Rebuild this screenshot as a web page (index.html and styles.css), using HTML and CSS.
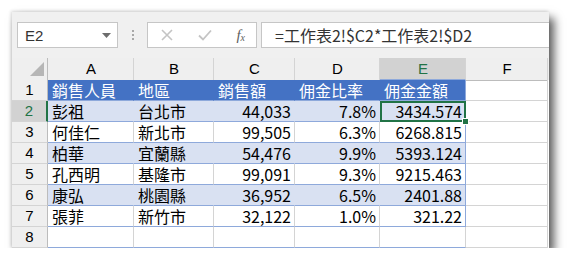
FILE: index.html
```html
<!DOCTYPE html>
<html lang="zh-Hant">
<head>
    <meta charset="UTF-8">
    <title>工作表2</title>
    <link rel="stylesheet" href="styles.css">
</head>
<body>
    <div class="window">
        <!-- 名稱方塊 + 資料編輯列 -->
        <div class="toolbar">
            <div class="namebox">
                <span>E2</span>
                <svg class="drop" width="9" height="5" viewBox="0 0 9 5"><path d="M0 0H9L4.5 5Z" fill="#6d6d6d"/></svg>
            </div>
            <div class="grip"><i></i><i></i><i></i></div>
            <div class="buttons">
                <svg width="14" height="14" viewBox="0 0 14 14"><path d="M2 2L12 12M12 2L2 12" stroke="#c4c4c4" stroke-width="1.6"/></svg>
                <svg width="16" height="14" viewBox="0 0 16 14"><path d="M2 7.5L6 11.5L14 2.5" stroke="#c4c4c4" stroke-width="1.8" fill="none"/></svg>
                <span class="fx">f<sub>x</sub></span>
            </div>
            <div class="formula">=工作表2!$C2*工作表2!$D2</div>
        </div>

        <div class="sheet">
            <div class="row head">
                <div class="corner"><svg width="14" height="14" viewBox="0 0 14 14"><path d="M14 0V14H0Z" fill="#b6b6b6"/></svg></div>
                <div>A</div><div>B</div><div>C</div><div>D</div><div class="on">E</div><div>F</div>
            </div>
            <div class="row title">
                <div class="num">1</div>
                <div>銷售人員</div><div>地區</div><div>銷售額</div><div>佣金比率</div><div>佣金金額</div><div class="out"></div>
            </div>
            <div class="row band">
                <div class="num on">2</div>
                <div>彭祖</div><div>台北市</div><div class="r">44,033</div><div class="r">7.8%</div><div class="r sel">3434.574</div><div class="out"></div>
            </div>
            <div class="row">
                <div class="num">3</div>
                <div>何佳仁</div><div>新北市</div><div class="r">99,505</div><div class="r">6.3%</div><div class="r">6268.815</div><div class="out"></div>
            </div>
            <div class="row band">
                <div class="num">4</div>
                <div>柏華</div><div>宜蘭縣</div><div class="r">54,476</div><div class="r">9.9%</div><div class="r">5393.124</div><div class="out"></div>
            </div>
            <div class="row">
                <div class="num">5</div>
                <div>孔西明</div><div>基隆市</div><div class="r">99,091</div><div class="r">9.3%</div><div class="r">9215.463</div><div class="out"></div>
            </div>
            <div class="row band">
                <div class="num">6</div>
                <div>康弘</div><div>桃園縣</div><div class="r">36,952</div><div class="r">6.5%</div><div class="r">2401.88</div><div class="out"></div>
            </div>
            <div class="row">
                <div class="num">7</div>
                <div>張菲</div><div>新竹市</div><div class="r">32,122</div><div class="r">1.0%</div><div class="r">321.22</div><div class="out"></div>
            </div>
            <div class="row empty">
                <div class="num">8</div>
                <div></div><div></div><div></div><div></div><div></div><div></div>
            </div>
        </div>
    </div>
</body>
</html>
```

FILE: styles.css
```css
body {
    margin: 0;
    background-color: #ffffff;
    font-family: "Noto Sans CJK TC", sans-serif;
}

.window {
    margin: 12px 0 0 12px;
    width: 537px;
    background-color: #ffffff;
    box-shadow: 5px 6px 9px rgba(0, 0, 0, 0.65), -1px -1px 3px rgba(0, 0, 0, 0.15);
}

/* 上方的資料編輯列 */
.toolbar {
    display: flex;
    align-items: center;
    height: 46px;
    padding-left: 5px;
    background-color: #f0f0f0;
}
.namebox {
    display: flex;
    align-items: center;
    justify-content: space-between;
    box-sizing: border-box;
    width: 101px;
    height: 26px;
    padding: 0 6px 0 7px;
    background-color: #ffffff;
    border: 1px solid #c6c6c6;
    font-family: "Liberation Sans", sans-serif;
    font-size: 15px;
    color: #333333;
}
.grip {
    display: flex;
    flex-direction: column;
    gap: 2px;
    margin: 0 13px 0 14px;
}
.grip i {
    width: 2px;
    height: 2px;
    background-color: #a8a8a8;
}
.buttons {
    display: flex;
    align-items: center;
    justify-content: space-between;
    box-sizing: border-box;
    width: 110px;
    height: 26px;
    padding: 0 11px 0 12px;
    background-color: #ffffff;
    border: 1px solid #c6c6c6;
}
.fx {
    font-family: "Liberation Serif", serif;
    font-style: italic;
    font-size: 15px;
    color: #5e5e5e;
    line-height: 1;
}
.fx sub {
    font-size: 10px;
    vertical-align: -1px;
}
.formula {
    flex: 1;
    box-sizing: border-box;
    height: 26px;
    margin-left: 4px;
    padding-left: 13px;
    background-color: #ffffff;
    border: 1px solid #c6c6c6;
    border-right: none;
    font-size: 16px;
    line-height: 24px;
    color: #333333;
}

/* 工作表格線 */
.row {
    display: grid;
    grid-template-columns: 36px 86px 80px 81px 85px 86px 82px;
    height: 21px;
    font-size: 16px;
    line-height: 20px;
    color: #000000;
}
.row > div {
    box-sizing: border-box;
    padding: 0 3px 0 4px;
    border-right: 1px solid #d4d4d4;
    border-bottom: 1px solid #d4d4d4;
    white-space: nowrap;
}
.row .r {
    text-align: right;
}

.head {
    height: 22px;
    background-color: #efefef;
    font-family: "Liberation Sans", sans-serif;
    font-size: 15px;
    line-height: 21px;
}
.head > div {
    text-align: center;
    border-bottom-color: #bcbcbc;
}
.head .corner {
    display: flex;
    align-items: flex-end;
    justify-content: flex-end;
    padding: 0 3px 4px 0;
    border-right-color: #bcbcbc;
}
.head .on {
    background-color: #d2d2d2;
    color: #217346;
    border-bottom: 2px solid #217346;
}

.row .num {
    padding: 0;
    text-align: center;
    background-color: #efefef;
    border-right-color: #bcbcbc;
    font-family: "Liberation Sans", sans-serif;
    font-size: 15px;
}
.row .num.on {
    background-color: #d2d2d2;
    color: #217346;
    border-right: 2px solid #217346;
}

/* 表格樣式 */
.title > div:not(.num):not(.out),
.band > div:not(.num):not(.out),
.row > div:nth-child(n+2):nth-child(-n+6) {
    border-bottom-color: #8ea9db;
}
.title > div:nth-child(6),
.row:not(.head):not(.empty) > div:nth-child(6) {
    border-right-color: #8ea9db;
}
.empty > div:nth-child(n+2) {
    border-bottom-color: #d4d4d4;
}
.title > div:not(.num):not(.out) {
    background-color: #4472c4;
    border-right-color: #4472c4;
    color: #ffffff;
}
.band > div:not(.num):not(.out) {
    background-color: #d9e1f2;
    border-right-color: #d9e1f2;
}
.title > div:nth-child(6),
.band > div:nth-child(6) {
    border-right-color: #8ea9db;
}

.sel {
    position: relative;
    outline: 2px solid #217346;
    outline-offset: -2px;
}
.sel::after {
    content: "";
    position: absolute;
    right: -4px;
    bottom: -4px;
    width: 5px;
    height: 5px;
    background-color: #217346;
    border: 1px solid #ffffff;
}
```
